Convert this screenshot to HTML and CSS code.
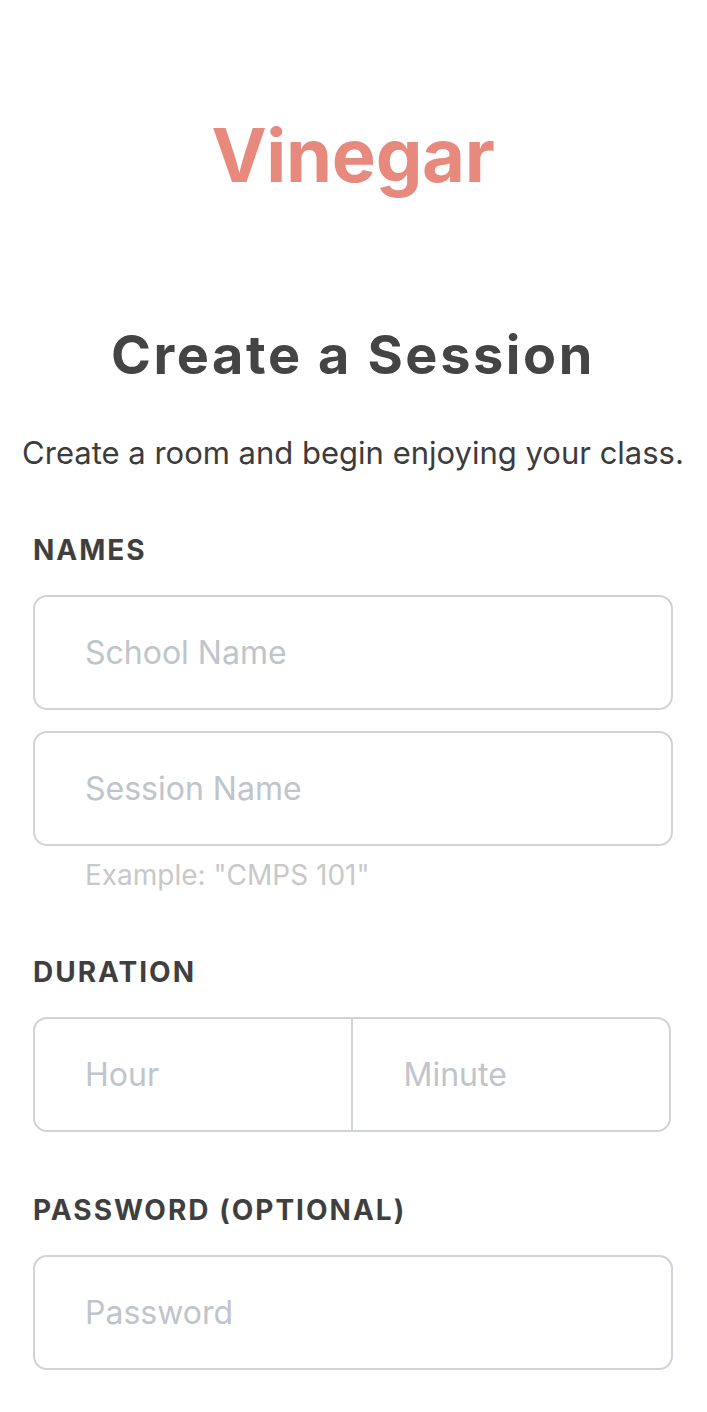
FILE: index.html
```html
<!DOCTYPE html>
<html lang="en">
<head>
<meta charset="utf-8">
<title>Vinegar – Create a Session</title>
<link rel="stylesheet" href="styles.css">
</head>
<body>
<main class="page">
  <header class="brand">Vinegar</header>
  <h1 class="title">Create a Session</h1>
  <p class="subtitle">Create a room and begin enjoying your class.</p>

  <form class="form">
    <section class="group group-names">
      <div class="label">NAMES</div>
      <div class="field"><span class="placeholder">School Name</span></div>
      <div class="field field-second"><span class="placeholder">Session Name</span></div>
      <div class="hint">Example: "CMPS 101"</div>
    </section>

    <section class="group group-duration">
      <div class="label">DURATION</div>
      <div class="split">
        <div class="split-cell"><span class="placeholder">Hour</span></div>
        <div class="split-cell"><span class="placeholder">Minute</span></div>
      </div>
    </section>

    <section class="group group-password">
      <div class="label">PASSWORD (OPTIONAL)</div>
      <div class="field"><span class="placeholder">Password</span></div>
    </section>
  </form>
</main>
</body>
</html>
```

FILE: styles.css
```css
* { box-sizing: border-box; }

html, body {
  margin: 0;
  padding: 0;
  background: #ffffff;
}

body {
  font-family: "Inter", "Roboto", "Liberation Sans", sans-serif;
  color: #424242;
}

.page {
  padding: 118px 34px 40px 33px;
}

.brand {
  font-size: 74px;
  line-height: 74px;
  font-weight: 700;
  color: #e8897d;
  text-align: center;
  letter-spacing: -0.3px;
}

.title {
  margin: 136px -20px 0;
  font-size: 54px;
  line-height: 54px;
  font-weight: 700;
  letter-spacing: 2.6px;
  color: #444444;
  text-align: center;
}

.subtitle {
  margin: 55px -20px 0;
  font-size: 31px;
  line-height: 31px;
  font-weight: 400;
  color: #3c3c3c;
  text-align: center;
}

.form {
  margin: 0;
}

.group-names { margin-top: 68px; }
.group-duration { margin-top: 69px; }
.group-password { margin-top: 64px; }

.label {
  font-size: 28px;
  line-height: 28px;
  font-weight: 700;
  letter-spacing: 2px;
  color: #3f3f3f;
  margin-bottom: 31px;
}

.field {
  height: 115px;
  border: 2px solid #d0d3d7;
  border-radius: 14px;
  display: flex;
  align-items: center;
  padding-left: 50px;
}

.field-second {
  margin-top: 21px;
}

.placeholder {
  font-size: 32px;
  font-weight: 400;
  color: #c0c4cb;
}

.hint {
  margin-top: 15px;
  padding-left: 52px;
  font-size: 28px;
  line-height: 28px;
  color: #c8c8c8;
}

.split {
  width: calc(100% - 2px);
  height: 115px;
  border: 2px solid #d0d3d7;
  border-radius: 14px;
  display: flex;
}

.split-cell {
  flex: 1;
  display: flex;
  align-items: center;
  padding-left: 50px;
}

.split-cell + .split-cell {
  border-left: 2px solid #d0d3d7;
  padding-left: 51px;
}
```
